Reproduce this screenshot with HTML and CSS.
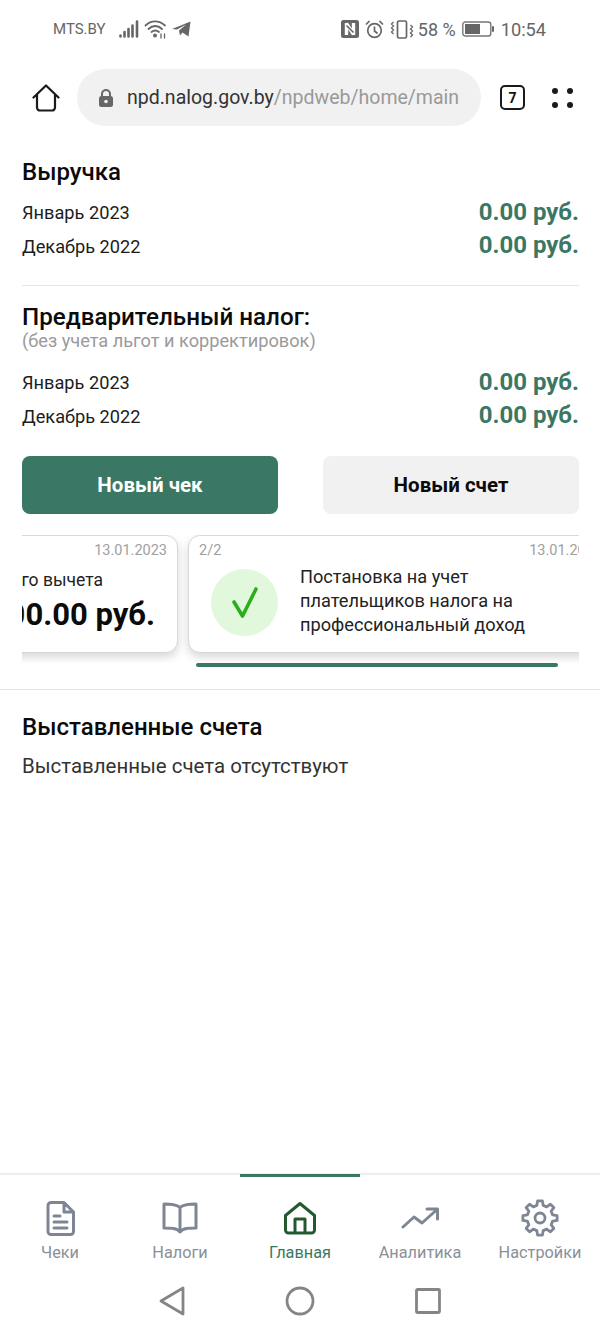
FILE: index.html
```html
<!DOCTYPE html>
<html lang="ru">
<head>
<meta charset="utf-8">
<title>npd.nalog.gov.by</title>
<link rel="stylesheet" href="styles.css">
</head>
<body>
<div class="phone">
  <header class="status">
    <div class="status-left">
      <span class="carrier">MTS.BY</span>
      <svg class="st-signal" width="21" height="18" viewBox="0 0 21 18"><path d="M1.500 15.500v1M5.500 12v4.500M9.500 9v7.500M13.500 5.500v11M18 1.500v15" stroke="#666" stroke-width="2.600" stroke-linecap="round" fill="none"/></svg>
      <svg class="st-wifi" width="24" height="20" viewBox="0 0 24 20" fill="none" stroke="#666" stroke-width="1.800" stroke-linecap="round"><path d="M1.500 6.500C7 1 15 1 21 6.500M4.500 10C8.500 6 14 6 18 10M7.500 13C10 11 12.500 11 15 13"/><circle cx="11" cy="16.500" r="2" fill="#666" stroke="none"/><path d="M17 15v4M20.500 15v4" stroke-width="1.300"/></svg>
      <svg class="st-tg" width="19" height="16" viewBox="0 0 19 16"><path d="M0 8L18.500 .5 16.500 15.500 10.500 11.500 8 14.500 7 9.500 14 3.500 5 8.500z" fill="#666"/></svg>
    </div>
    <div class="status-right">
      <svg class="st-nfc" width="18" height="18" viewBox="0 0 18 18" fill="none"><rect width="18" height="18" rx="2.500" fill="#666"/><path d="M5.500 3v12M5.500 3.500L12.500 14.500M12.500 3v12" stroke="#fff" stroke-width="3.400"/><path d="M5.500 5.500L12.500 12.500" stroke="#666" stroke-width="1.600"/></svg>
      <svg width="19" height="19" viewBox="0 0 19 19" fill="none" stroke="#666" stroke-width="1.700"><circle cx="9.500" cy="10.500" r="6.800"/><path d="M9.500 6.500v4.500l3 2.500M1 4.500L4.500 1M18 4.500L14.500 1"/></svg>
      <svg width="24" height="19" viewBox="0 0 24 19" fill="none" stroke="#666"><rect x="7.500" y="1" width="9" height="17" rx="1.500" stroke-width="1.700"/><path d="M3.500 2l-2 2 2 2-2 2 2 2-2 2 2 2M20.500 5l2 2-2 2 2 2-2 2 2 2-2 2" stroke-width="1.300"/></svg>
      <span class="pct">58 %</span>
      <svg width="32" height="16" viewBox="0 0 32 16" fill="none"><rect x=".8" y="1" width="28" height="14" rx="2.500" stroke="#777" stroke-width="1.400"/><rect x="3" y="3" width="15" height="10" fill="#666"/><rect x="30" y="5" width="2" height="6" rx="1" fill="#666"/></svg>
      <span class="clock">10:54</span>
    </div>
  </header>

  <nav class="browser">
    <svg class="br-home" width="28" height="28" viewBox="0 0 28 28" fill="none" stroke="#1a1a1a" stroke-width="2.200" stroke-linejoin="round" stroke-linecap="round"><path d="M1.500 13.500L14 1.500l12.500 12M5 11v12.500a3 3 0 0 0 3 3h12a3 3 0 0 0 3-3V11"/></svg>
    <div class="url">
      <svg width="16" height="20" viewBox="0 0 16 20"><path d="M4 9V6a4 4 0 0 1 8 0v3" fill="none" stroke="#666" stroke-width="2"/><rect x="1" y="8" width="14" height="11" rx="2.500" fill="#666"/><circle cx="8" cy="13.500" r="1.800" fill="#f1f1f1"/></svg>
      <span class="url-text"><b>npd.nalog.gov.by</b>/npdweb/home/main</span>
    </div>
    <span class="tabs">7</span>
    <span class="dots"><i></i><i></i><i></i><i></i></span>
  </nav>

  <main class="content">
    <section class="sum">
      <h2 class="title">Выручка</h2>
      <div class="row"><span>Январь 2023</span><strong>0.00 руб.</strong></div>
      <div class="row"><span>Декабрь 2022</span><strong>0.00 руб.</strong></div>
    </section>
    <section class="sum tax">
      <h2 class="title">Предварительный налог:</h2>
      <p class="hint">(без учета льгот и корректировок)</p>
      <div class="row"><span>Январь 2023</span><strong>0.00 руб.</strong></div>
      <div class="row"><span>Декабрь 2022</span><strong>0.00 руб.</strong></div>
    </section>
    <div class="actions">
      <button class="btn primary">Новый чек</button>
      <button class="btn secondary">Новый счет</button>
    </div>
    <div class="carousel">
      <div class="track">
        <article class="card card-one">
          <span class="date">13.01.2023</span>
          <span class="c1-label">Остаток налогового вычета</span>
          <span class="c1-amount">1000.00 руб.</span>
        </article>
        <article class="card card-two">
          <div class="card-head"><span class="date">2/2</span><span class="date">13.01.2023</span></div>
          <div class="card-body">
            <span class="check"><svg width="26" height="31" viewBox="0 0 26 31" fill="none" stroke="#2cad1e" stroke-width="3.600" stroke-linecap="round" stroke-linejoin="round"><path d="M2 15l8.500 14L24 2"/></svg></span>
            <p>Постановка на учет плательщиков налога на профессиональный доход</p>
          </div>
        </article>
      </div>
    </div>
    <div class="progress"></div>
  </main>

  <section class="invoices">
    <h2 class="title">Выставленные счета</h2>
    <p>Выставленные счета отсутствуют</p>
  </section>

  <nav class="tabbar">
    <a class="tab">
      <span class="tab-icon"><svg width="29" height="35" viewBox="0 0 29 35" fill="none" stroke="#7e8594" stroke-width="3" stroke-linejoin="round" stroke-linecap="round"><path d="M5 1.500h13l9.500 9.500v19.500a3 3 0 0 1-3 3H5a3 3 0 0 1-3-3V4.500a3 3 0 0 1 3-3zM18 1.500V11h9.500M8 15h6M8 21h13M8 27h13"/></svg></span>
      <span>Чеки</span>
    </a>
    <a class="tab">
      <span class="tab-icon"><svg width="36" height="32" viewBox="0 0 36 32" fill="none" stroke="#7e8594" stroke-width="3" stroke-linejoin="round" stroke-linecap="round"><path d="M18 5.500C15 2.500 9 2 2 2v24c7 0 13 0 16 4 3-4 9-4 16-4V2c-7 0-13 .5-16 3.500zM18 5.500V30"/></svg></span>
      <span>Налоги</span>
    </a>
    <a class="tab active">
      <span class="tab-icon"><svg width="32" height="33" viewBox="0 0 32 33" fill="none" stroke="#23592f" stroke-width="3" stroke-linejoin="round" stroke-linecap="round"><path d="M1.500 13.500L16 1.500l14.500 12v14.500a3 3 0 0 1-3 3h-23a3 3 0 0 1-3-3zM11 31V17h10v14"/></svg></span>
      <span>Главная</span>
    </a>
    <a class="tab">
      <span class="tab-icon"><svg width="38" height="22" viewBox="0 0 38 22" fill="none" stroke="#7e8594" stroke-width="3" stroke-linejoin="round" stroke-linecap="round"><path d="M2 20l11-10 8 6L35.500 3M26 2h10.500v10"/></svg></span>
      <span>Аналитика</span>
    </a>
    <a class="tab">
      <span class="tab-icon"><svg width="38" height="38" viewBox="0 0 38 38" fill="none" stroke="#7e8594" stroke-width="2.800" stroke-linejoin="round"><path d="M31.610 15.860L36.130 16.590V21.410L31.610 22.140L30.140 25.700L32.820 29.410L29.410 32.820L25.700 30.140L22.140 31.610L21.410 36.130H16.590L15.860 31.610L12.300 30.140L8.590 32.820L5.180 29.410L7.860 25.700L6.390 22.140L1.870 21.410V16.590L6.390 15.860L7.860 12.300L5.180 8.590L8.590 5.180L12.300 7.860L15.860 6.390L16.590 1.870H21.410L22.140 6.390L25.700 7.860L29.410 5.180L32.820 8.590L30.140 12.300z"/><circle cx="19" cy="19" r="5"/></svg></span>
      <span>Настройки</span>
    </a>
  </nav>

  <footer class="sysnav">
    <svg width="26" height="30" viewBox="0 0 26 30" fill="none" stroke="#858585" stroke-width="2.800" stroke-linejoin="round"><path d="M24 2v26L2 15z"/></svg>
    <svg width="30" height="30" viewBox="0 0 30 30" fill="none" stroke="#858585" stroke-width="2.800"><circle cx="15" cy="15" r="13"/></svg>
    <svg width="26" height="30" viewBox="0 -2 26 30" fill="none" stroke="#858585" stroke-width="2.800" stroke-linejoin="round"><rect x="1.500" y="1.500" width="23" height="23" rx="1"/></svg>
  </footer>
</div>
</body>
</html>
```
FILE: styles.css
```css
* { box-sizing: border-box; }
html, body { margin: 0; padding: 0; background: #fff; }
body { font-family: Roboto, "Noto Sans", sans-serif; color: #111; }
.phone { width: 600px; height: 1332px; display: flex; flex-direction: column; overflow: hidden; background: #fff; }

.status { height: 64px; padding: 0 54px 6px 53px; display: flex; justify-content: space-between; align-items: center; color: #666; flex: none; }
.status-left, .status-right { display: flex; align-items: center; }
.status-left { gap: 4px; }
.status-right { gap: 6px; }
.carrier { font-size: 15px; margin-right: 9px; }
.pct { font-size: 18px; margin-left: -2px; }
.clock { font-size: 18.200px; margin-left: 1px; }

.browser { height: 67px; padding: 0 23px 0 32px; display: flex; align-items: center; flex: none; }
.br-home { flex: none; }
.url { margin-left: 17px; width: 404px; height: 57px; border-radius: 29px; background: #f1f1f1; display: flex; align-items: center; padding-left: 21px; gap: 13px; flex: none; }
.url-text { font-size: 19.500px; color: #999; white-space: nowrap; }
.url-text b { font-weight: 400; color: #333; }
.tabs { margin-left: 19px; width: 25px; height: 25px; border: 2.500px solid #1a1a1a; border-radius: 5px; font-size: 14px; font-weight: 700; display: flex; align-items: center; justify-content: center; flex: none; }
.dots { margin-left: 27px; width: 21px; display: grid; grid-template-columns: 6px 6px; justify-content: space-between; row-gap: 8px; flex: none; }
.dots i { width: 6px; height: 6px; border-radius: 50%; background: #1a1a1a; }

.content { padding: 0 21px 0 22px; flex: none; }
.sum { border-bottom: 1px solid #e6e6e6; padding-top: 27px; height: 155px; }
.sum.tax { border-bottom: 0; height: 170px; padding-top: 18px; }
.title { margin: 0; font-size: 24px; line-height: 28px; font-weight: 500; color: #0b0b0b; }
.tax .title { font-size: 24.200px; line-height: 27px; }
.sum .title + .row { margin-top: 9px; }
.hint { margin: 0 0 14px; font-size: 18.200px; line-height: 20px; color: #9a9a9a; }
.row { display: flex; justify-content: space-between; align-items: center; height: 33.500px; font-size: 18.200px; color: #1c1c1c; }
.row span { padding-top: 2px; }
.row strong { font-size: 24px; font-weight: 700; color: #3a7764; }

.actions { display: flex; justify-content: space-between; }
.btn { width: 256px; height: 58px; border: 0; border-radius: 8px; font: 700 20.500px Roboto, sans-serif; }
.btn.primary { background: #3a7764; color: #fff; }
.btn.secondary { background: #f1f1f1; color: #0b0b0b; }

.carousel { margin-top: 21px; height: 128px; overflow: hidden; }
.track { display: flex; gap: 10px; margin-left: -326px; width: 1000px; }
.card { position: relative; height: 118px; background: #fff; border: 1px solid #d8d8d8; border-radius: 12px; box-shadow: 0 4px 10px rgba(0,0,0,.16); flex: none; }
.card-one { width: 482px; }
.card-one .date { position: absolute; right: 10px; top: 6px; }
.date { font-size: 14.500px; line-height: 17px; color: #a0a0a0; }
.c1-label { position: absolute; right: 74px; top: 34px; font-size: 17.500px; white-space: nowrap; color: #222; }
.c1-amount { position: absolute; right: 22px; top: 60px; font-size: 31px; font-weight: 700; color: #0b0b0b; white-space: nowrap; }
.card-two { width: 425px; padding: 6px 10px 0; }
.card-head { display: flex; justify-content: space-between; }
.card-body { display: flex; align-items: center; gap: 22px; margin-top: 8px; padding-left: 12px; }
.check { width: 67px; height: 67px; border-radius: 50%; background: #e2f8dc; display: flex; align-items: center; justify-content: center; flex: none; }
.card-body p { margin: -2px 0 0; width: 240px; font-size: 18.200px; line-height: 24px; color: #222; }

.progress { height: 4px; width: 362px; margin: 0 0 0 174px; background: #3a7764; border-radius: 2px; }

.invoices { margin-top: 22px; padding: 23px 22px 0; border-top: 1px solid #e6e6e6; flex: 1; }
.invoices p { margin: 12px 0 0; font-size: 20.450px; line-height: 26px; color: #333; }

.tabbar { height: 105px; display: grid; grid-template-columns: repeat(5, 120px); border-top: 2px solid #eee; flex: none; }
.tab { display: flex; flex-direction: column; align-items: center; gap: 6px; padding-top: 24px; position: relative; font-size: 16.300px; line-height: 19px; color: #8b8f96; white-space: nowrap; }
.tab-icon { height: 38px; display: flex; align-items: center; justify-content: center; }
.tab.active { color: #3a7764; }
.tab.active::before { content: ""; position: absolute; top: -1px; left: 0; right: 0; height: 3px; background: #3a7764; }

.sysnav { height: 54px; display: flex; align-items: flex-start; justify-content: center; gap: 100px; flex: none; padding-top: 8px; }
```
